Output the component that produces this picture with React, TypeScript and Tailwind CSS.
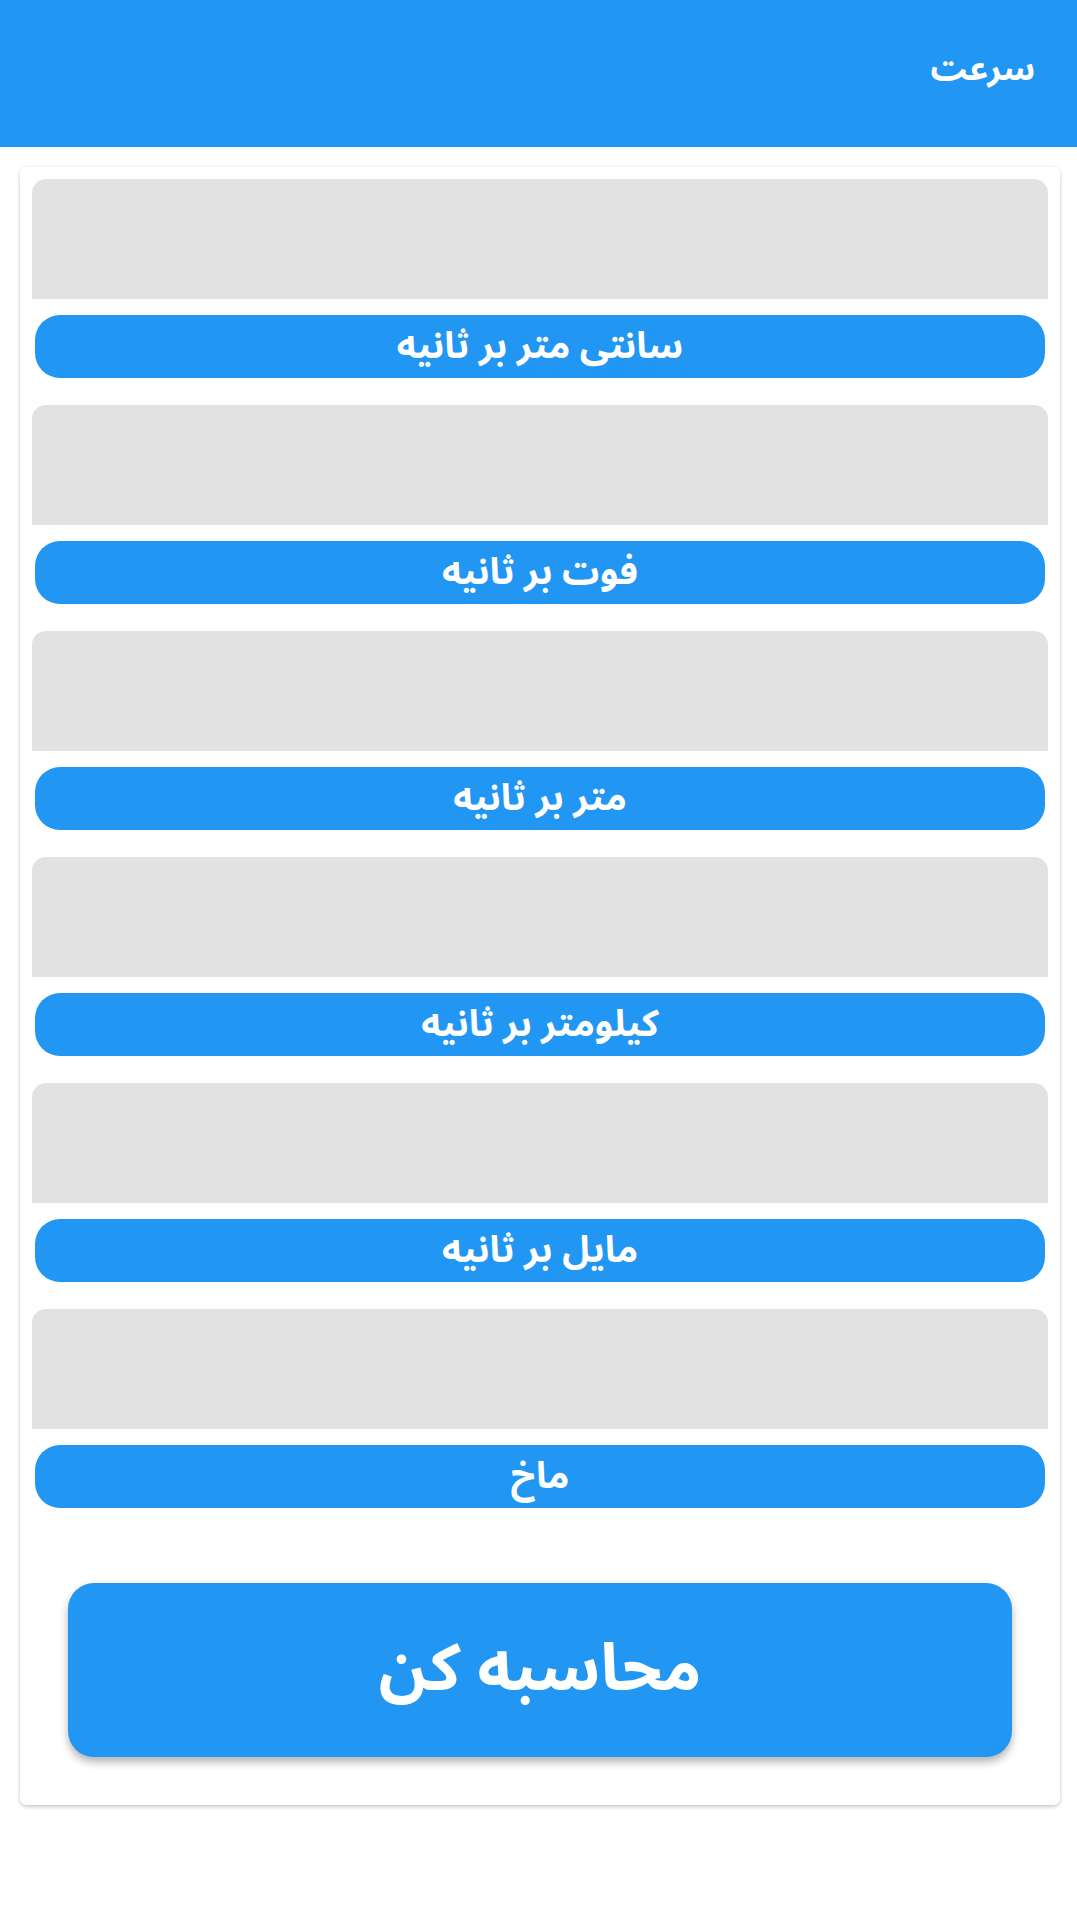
import React from "react";

const units = [
  "سانتی متر بر ثانیه",
  "فوت بر ثانیه",
  "متر بر ثانیه",
  "کیلومتر بر ثانیه",
  "مایل بر ثانیه",
  "ماخ",
];

export default function App() {
  return (
    <div
      dir="rtl"
      className="min-h-[1915px] w-[1077px] bg-white"
      style={{ fontFamily: '"Noto Sans Arabic", "DejaVu Sans", sans-serif' }}
    >
      <header className="h-[147px] bg-[#2196f3] pr-[42px] pt-[44px]">
        <h1 className="text-[34px] font-bold leading-[50px] text-white">سرعت</h1>
      </header>
      <div className="pt-[20px] pr-[17px] pl-[20px]">
        <div className="rounded-[6px] bg-white px-[12px] pt-[12px] pb-[48px] shadow-[0_2px_4px_rgba(0,0,0,0.2),0_0_2px_rgba(0,0,0,0.08)]">
          <div className="flex flex-col gap-[27px]">
            {units.map((u) => (
              <div key={u} className="flex flex-col">
                <div className="h-[120px] rounded-t-[14px] bg-[#e3e2e3]" />
                <button className="mx-[3px] mt-[16px] flex h-[63px] items-center justify-center rounded-[25px] bg-[#2196f3] text-[37px] font-bold text-white">
                  {u}
                </button>
              </div>
            ))}
          </div>
          <div className="mx-[36px] mt-[75px]">
            <button className="flex h-[174px] w-full items-center justify-center rounded-[26px] bg-[#2196f3] text-[65px] font-bold text-white shadow-[0_5px_8px_rgba(0,0,0,0.3)]">
              محاسبه کن
            </button>
          </div>
        </div>
      </div>
    </div>
  );
}
